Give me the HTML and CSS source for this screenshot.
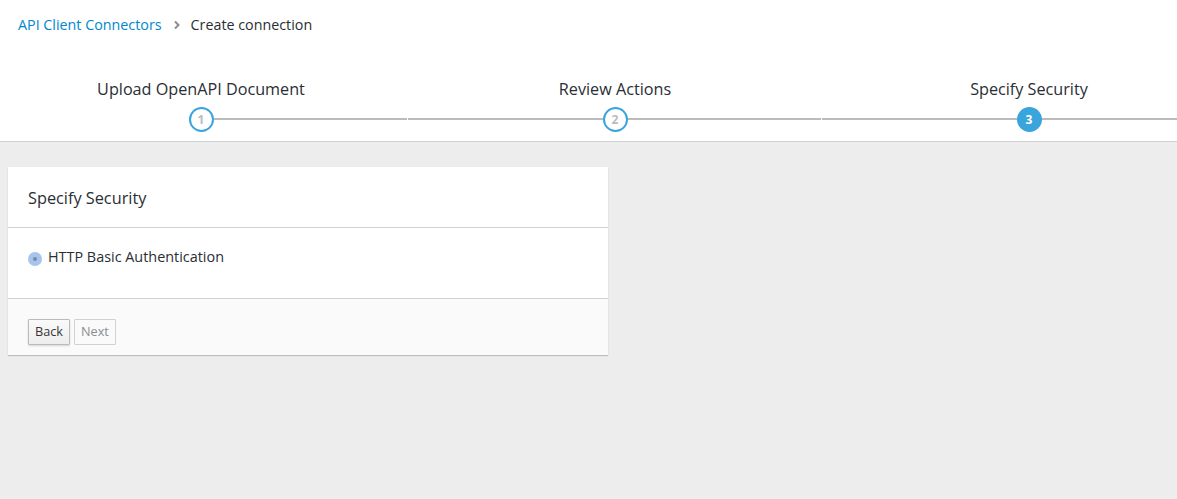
FILE: index.html
```html
<!DOCTYPE html>
<html lang="en">

<head>
    <meta charset="UTF-8">
    <meta name="viewport" content="width=device-width, initial-scale=1.0">
    <title>Create connection</title>
    <link rel="stylesheet" href="styles.css">
</head>

<body>
    <div class="page-header">
        <ol class="breadcrumb">
            <li><a href="#">API Client Connectors</a></li>
            <li class="sep">
                <svg width="8" height="10" viewBox="0 0 8 10"><path d="M2 1.5 L5.5 5 L2 8.5" fill="none" stroke="#8b8d8f" stroke-width="2"/></svg>
            </li>
            <li class="current">Create connection</li>
        </ol>
        <ul class="steps">
            <li class="step first">
                <span class="step-label">Upload OpenAPI Document</span>
                <span class="step-circle">1</span>
            </li>
            <li class="step">
                <span class="step-label">Review Actions</span>
                <span class="step-circle">2</span>
            </li>
            <li class="step active">
                <span class="step-label">Specify Security</span>
                <span class="step-circle">3</span>
            </li>
        </ul>
    </div>

    <div class="content">
        <div class="card">
            <div class="card-heading">Specify Security</div>
            <div class="card-body">
                <label class="radio">
                    <span class="radio-dot"></span>
                    HTTP Basic Authentication
                </label>
            </div>
            <div class="card-footer">
                <button class="btn">Back</button>
                <button class="btn" disabled>Next</button>
            </div>
        </div>
    </div>
</body>

</html>
```

FILE: styles.css
```css
body {
    font-family: "Open Sans", "Liberation Sans", sans-serif;
    background-color: #ededed;
    color: #363636;
    margin: 0;
    padding: 0;
    min-height: 499px;
}

.page-header {
    background-color: #fff;
    border-bottom: 1px solid #d1d1d1;
    overflow: hidden;
}

.breadcrumb {
    display: flex;
    align-items: center;
    list-style: none;
    margin: 0;
    padding: 15px 18px 0;
    font-size: 14.3px;
    line-height: 20px;
}

.breadcrumb a {
    color: #0088ce;
    text-decoration: none;
}

.breadcrumb .sep {
    display: flex;
    align-items: center;
    padding: 0 10px 0 11px;
}

.breadcrumb .current {
    color: #292e34;
}

.steps {
    display: flex;
    list-style: none;
    margin: 43px 0 0 -6px;
    padding: 0 0 9px;
}

.step {
    flex: 0 0 414px;
    position: relative;
    display: flex;
    flex-direction: column;
    align-items: center;
}

/* connecting line */
.step::before {
    content: "";
    position: absolute;
    left: 0;
    right: 1px;
    top: 40px;
    height: 2px;
    background-color: #bbb;
}

.step.first::before {
    left: 50%;
}

.step.active::before {
    right: 0;
}

.step-label {
    font-size: 16.2px;
    line-height: 22px;
    color: #292e34;
}

.step-circle {
    position: relative;
    margin-top: 7px;
    width: 21px;
    height: 21px;
    border: 2px solid #39a5dc;
    border-radius: 50%;
    background-color: #fff;
    color: #bbb;
    font-size: 12px;
    font-weight: 700;
    line-height: 21px;
    text-align: center;
}

.step.active .step-circle {
    background-color: #39a5dc;
    color: #fff;
}

.content {
    padding: 25px 8px;
}

.card {
    width: 600px;
    background-color: #fff;
    box-shadow: 0 1px 1px rgba(3, 3, 3, 0.2);
}

.card-heading {
    padding: 21px 20px 19px;
    font-size: 16.3px;
    line-height: 20px;
    color: #292e34;
    border-bottom: 1px solid #d1d1d1;
}

.card-body {
    padding: 19px 20px 31px;
    font-size: 14.4px;
    line-height: 20px;
    color: #292e34;
}

.radio {
    display: flex;
    align-items: center;
}

.radio-dot {
    width: 14px;
    height: 14px;
    margin: 3px 6px 0 0;
    border-radius: 50%;
    background-color: #a6c4ec;
    display: flex;
    align-items: center;
    justify-content: center;
}

.radio-dot::after {
    content: "";
    width: 4px;
    height: 4px;
    border-radius: 50%;
    background-color: #7d8a9c;
}

.card-footer {
    background-color: #fafafa;
    border-top: 1px solid #d1d1d1;
    padding: 20px 20px 10px;
    display: flex;
    gap: 4px;
}

.btn {
    font-family: inherit;
    font-size: 12.7px;
    line-height: 19px;
    padding: 2px 6px 3px;
    border: 1px solid #bbb;
    border-radius: 1px;
    background: linear-gradient(#fafafa, #ededed);
    color: #363636;
    box-shadow: 0 1px 2px rgba(3, 3, 3, 0.15);
    cursor: pointer;
}

.btn:disabled {
    background: transparent;
    border-color: #d1d1d1;
    color: #8b8d8f;
    box-shadow: none;
    cursor: default;
}
```
